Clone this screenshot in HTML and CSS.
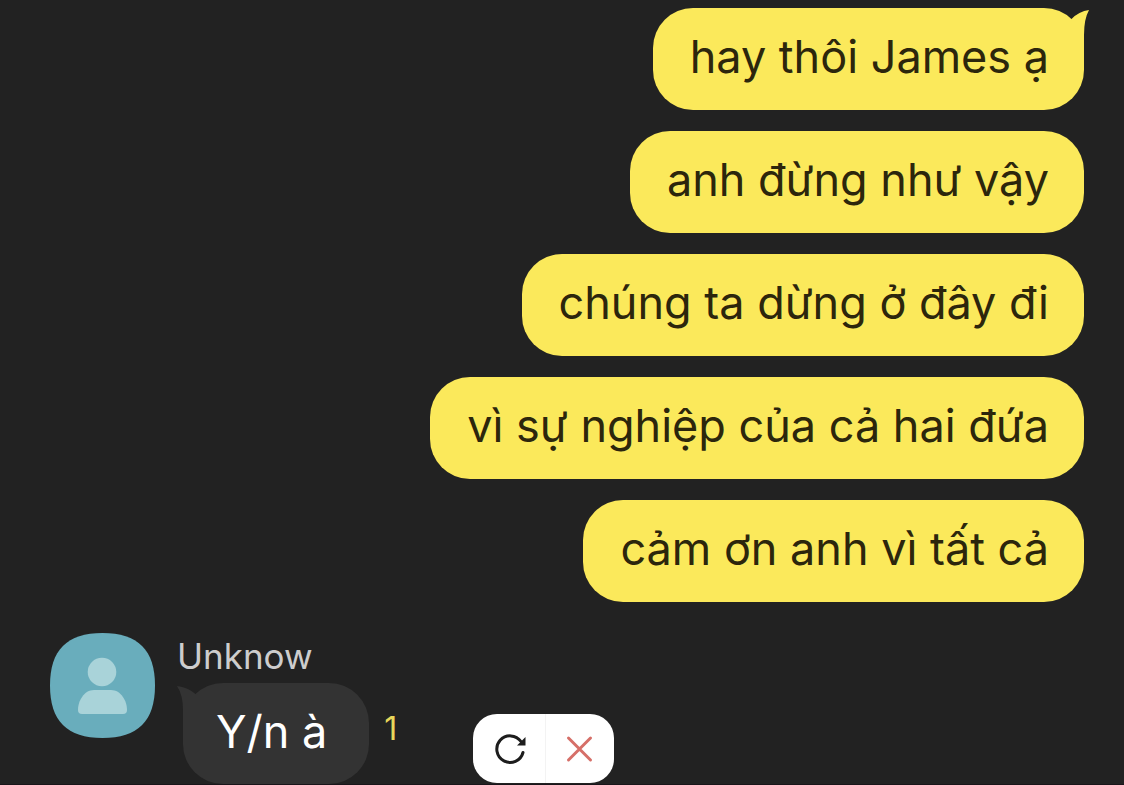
FILE: index.html
```html
<!DOCTYPE html>
<html lang="vi">
<head>
<meta charset="utf-8">
<meta name="viewport" content="width=device-width, initial-scale=1">
<title>Chat</title>
<link rel="stylesheet" href="styles.css">
</head>
<body>
<main class="chat">
  <section class="sent">
    <p class="bubble bubble-sent">hay thôi James ạ
      <svg class="tail tail-sent" viewBox="0 0 40 40" aria-hidden="true"><path d="M16 11.500Q24 3 34 2Q29 11 29 27V40H14V12Z"/></svg>
    </p>
    <p class="bubble bubble-sent">anh đừng như vậy</p>
    <p class="bubble bubble-sent">chúng ta dừng ở đây đi</p>
    <p class="bubble bubble-sent">vì sự nghiệp của cả hai đứa</p>
    <p class="bubble bubble-sent">cảm ơn anh vì tất cả</p>
  </section>
  <section class="received">
    <svg class="avatar" viewBox="0 0 105 105" role="img" aria-label="Unknow">
      <path fill="#69adbc" d="M52.500 0C88 0 105 17 105 52.500S88 105 52.500 105S0 88 0 52.500S17 0 52.500 0Z"/>
      <circle cx="52" cy="39" r="14.300" fill="#a9d3d9"/>
      <path fill="#a9d3d9" d="M44 57H61C71 57 77 68 77 77Q77 81 73 81H32Q28 81 28 77C28 68 34 57 44 57Z"/>
    </svg>
    <div class="message">
      <h2 class="name">Unknow</h2>
      <div class="line">
        <p class="bubble bubble-received">Y/n à
          <svg class="tail tail-received" viewBox="0 0 40 40" aria-hidden="true"><path d="M19 11.500Q11 4 0 3Q6 12 6 27V40H21V12Z"/></svg>
        </p>
        <span class="unread">1</span>
      </div>
    </div>
  </section>
  <div class="toolbar">
    <button class="tool" type="button" aria-label="Reload">
      <svg viewBox="0 0 36 36" aria-hidden="true"><path d="M32 21.500A13.300 13.300 0 1 1 30 10.500" fill="none" stroke="#1d1d1d" stroke-width="3" stroke-linecap="round"/><path d="M34.500 6V14.500H26Z" fill="#1d1d1d"/></svg>
    </button>
    <button class="tool" type="button" aria-label="Close">
      <svg viewBox="0 0 36 36" aria-hidden="true"><path d="M6.500 7L28.500 29M28.500 7L6.500 29" fill="none" stroke="#d66f68" stroke-width="3" stroke-linecap="round"/></svg>
    </button>
  </div>
</main>
</body>
</html>
```
FILE: styles.css
```css
* {
  box-sizing: border-box;
}

body {
  margin: 0;
  background: #222;
  font-family: Inter, "Liberation Sans", sans-serif;
}

.chat {
  position: relative;
  min-height: 100vh;
  padding: 8px 40px 0 50px;
  border-bottom: 1px solid #19151a;
}

.sent {
  display: flex;
  flex-direction: column;
  align-items: flex-end;
  gap: 21px;
}

.bubble {
  position: relative;
  margin: 0;
  padding: 21px 35px 25px 37px;
  border-radius: 40px;
  font-size: 45px;
  line-height: 56px;
}

.bubble-sent {
  background: #fbe95b;
  color: #2c260c;
}

.bubble-received {
  padding: 21px 42px 24px 33px;
  background: #333;
  color: #fff;
}

.tail {
  position: absolute;
  top: 0;
  width: 40px;
  height: 40px;
}

.tail-sent {
  right: -11px;
  fill: #fbe95b;
}

.tail-received {
  left: -6px;
  fill: #333;
}

.received {
  display: flex;
  align-items: flex-start;
  gap: 22px;
  margin-top: 31px;
}

.avatar {
  flex: none;
  width: 105px;
  height: 105px;
}

.name {
  margin: 0;
  color: #cdcdcd;
  font-size: 35px;
  font-weight: 400;
  line-height: 46px;
}

.line {
  display: flex;
  align-items: center;
  gap: 15px;
  margin: 4px 0 0 6px;
}

.unread {
  padding-bottom: 9px;
  color: #e8d75a;
  font-size: 32px;
  line-height: 40px;
}

.toolbar {
  position: absolute;
  bottom: 1px;
  left: 50%;
  display: flex;
  margin-left: -89px;
  overflow: hidden;
  border-radius: 24px;
  background: #fff;
}

.tool {
  display: flex;
  align-items: center;
  justify-content: center;
  width: 68px;
  height: 69px;
  padding: 0;
  border: 0;
  background: none;
}

.tool:first-child {
  width: 73px;
  border-right: 1px solid #f3f3f3;
}

.tool svg {
  width: 36px;
  height: 36px;
}
```
